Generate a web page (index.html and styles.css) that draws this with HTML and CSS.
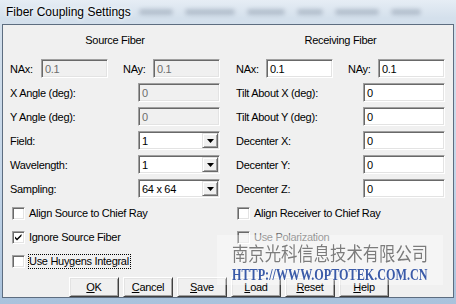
FILE: index.html
```html
<!DOCTYPE html>
<html>
<head>
<meta charset="utf-8">
<link rel="stylesheet" href="styles.css">
</head>
<body>
<div class="titlebar">
  <span class="title">Fiber Coupling Settings</span>
  <div class="smudges">
    <span class="smudge s1"></span><span class="smudge s2"></span><span class="smudge s3"></span><span class="smudge s4"></span><span class="smudge s5"></span><span class="smudge s6"></span>
  </div>
</div>
<div class="window">
  <div class="cols">
    <section class="col">
      <h2 class="head">Source Fiber</h2>
      <div class="rows">
        <div class="row na na-left">
          <span class="lbl">NAx:</span><span class="edit dis">0.1</span><span></span><span class="lbl">NAy:</span><span class="edit dis">0.1</span>
        </div>
        <div class="row"><span class="lbl">X Angle (deg):</span><span class="edit dis field">0</span></div>
        <div class="row"><span class="lbl">Y Angle (deg):</span><span class="edit dis field">0</span></div>
        <div class="row"><span class="lbl">Field:</span><span class="combo field"><span class="ctext">1</span><span class="drop"><svg width="7" height="4" viewBox="0 0 7 4"><polygon points="0,0 7,0 3.5,4" fill="#000"/></svg></span></span></div>
        <div class="row"><span class="lbl">Wavelength:</span><span class="combo field"><span class="ctext">1</span><span class="drop"><svg width="7" height="4" viewBox="0 0 7 4"><polygon points="0,0 7,0 3.5,4" fill="#000"/></svg></span></span></div>
        <div class="row"><span class="lbl">Sampling:</span><span class="combo field"><span class="ctext">64 x 64</span><span class="drop"><svg width="7" height="4" viewBox="0 0 7 4"><polygon points="0,0 7,0 3.5,4" fill="#000"/></svg></span></span></div>
      </div>
      <div class="checks">
        <div class="check"><span class="box"></span><span class="ctl">Align Source to Chief Ray</span></div>
        <div class="check"><span class="box"><svg width="11" height="11" viewBox="0 0 11 11"><path d="M2 4.5 L4 6.5 L8.5 2 L8.5 4 L4 8.5 L2 6.5 Z" fill="#000"/></svg></span><span class="ctl">Ignore Source Fiber</span></div>
        <div class="check"><span class="box"></span><span class="ctl focus">Use Huygens Integral</span></div>
      </div>
    </section>
    <section class="col col-right">
      <h2 class="head">Receiving Fiber</h2>
      <div class="rows">
        <div class="row na na-right">
          <span class="lbl">NAx:</span><span class="edit">0.1</span><span></span><span class="lbl">NAy:</span><span class="edit">0.1</span>
        </div>
        <div class="row"><span class="lbl">Tilt About X (deg):</span><span class="edit field">0</span></div>
        <div class="row"><span class="lbl">Tilt About Y (deg):</span><span class="edit field">0</span></div>
        <div class="row"><span class="lbl">Decenter X:</span><span class="edit field">0</span></div>
        <div class="row"><span class="lbl">Decenter Y:</span><span class="edit field">0</span></div>
        <div class="row"><span class="lbl">Decenter Z:</span><span class="edit field">0</span></div>
      </div>
      <div class="checks">
        <div class="check"><span class="box"></span><span class="ctl">Align Receiver to Chief Ray</span></div>
        <div class="check disabled"><span class="box"></span><span class="ctl">Use Polarization</span></div>
      </div>
    </section>
  </div>
  <div class="buttons">
    <span class="btn"><u>O</u>K</span>
    <span class="btn"><u>C</u>ancel</span>
    <span class="btn"><u>S</u>ave</span>
    <span class="btn"><u>L</u>oad</span>
    <span class="btn"><u>R</u>eset</span>
    <span class="btn"><u>H</u>elp</span>
  </div>
</div>
<div class="watermark">
  <div class="wm-cn">南京光科信息技术有限公司</div>
  <div class="wm-url">HTTP://WWW.OPTOTEK.COM.CN</div>
</div>
</body>
</html>
```
FILE: styles.css
```css
* { box-sizing: border-box; }
html, body { margin: 0; padding: 0; }
body {
  width: 456px;
  height: 304px;
  overflow: hidden;
  position: relative;
  background: linear-gradient(#e6edf5 0px, #d4e0ec 18px, #c3d5e8 60%, #a9c2dc 100%);
  font-family: "Liberation Sans", Arial, sans-serif;
}
.titlebar {
  height: 24px;
  display: flex;
  align-items: center;
  padding-left: 6px;
}
.title {
  font-size: 12px;
  color: #000;
  text-shadow: 0 0 5px #f4f8fc, 0 0 3px #f4f8fc;
  position: relative;
  z-index: 1;
}
.smudges {
  display: flex;
  gap: 12px;
  margin-left: 8px;
  align-items: center;
}
.smudge {
  display: block;
  height: 6px;
  border-radius: 3px;
  background: #4f5f75;
  opacity: 0.28;
  filter: blur(2px);
}
.s1 { width: 34px; }
.s2 { width: 50px; }
.s3 { width: 38px; }
.s4 { width: 26px; }
.s5 { width: 44px; }
.s6 { width: 30px; }

.window {
  margin: 0 2px;
  height: 274px;
  border: 1px solid #5d6d80;
  background: #f0f0f0;
  font-size: 11px;
  letter-spacing: -0.3px;
  color: #000;
}
.cols {
  display: grid;
  grid-template-columns: 210px 209px;
  column-gap: 16px;
  padding: 7px 0 0 7px;
}
.head {
  margin: 0 0 11px;
  font-size: 11px;
  font-weight: normal;
  line-height: 16px;
  text-align: center;
}
.rows {
  display: flex;
  flex-direction: column;
  gap: 5px;
}
.row {
  height: 19px;
  display: flex;
  align-items: center;
}
.row .lbl { flex: 1; }
.na { display: grid; align-items: center; }
.na-left { grid-template-columns: 31px 67px 15px 30px 67px; }
.na-right { grid-template-columns: 30px 67px 15px 30px 67px; }
.edit, .combo {
  height: 19px;
  display: flex;
  align-items: center;
  background: #fff;
  border: 1px solid;
  border-color: #a0a0a0 #fff #fff #a0a0a0;
  box-shadow: inset 1px 1px 0 #696969, inset -1px -1px 0 #e3e3e3;
  padding-left: 3px;
}
.edit.dis { background: #f0f0f0; color: #6d6d6d; }
.field { width: 82px; flex: none; }
.combo { padding: 1px; }
.ctext { flex: 1; padding-left: 2px; }
.drop {
  width: 16px;
  height: 15px;
  display: flex;
  align-items: center;
  justify-content: center;
  background: #f0f0f0;
  border: 1px solid;
  border-color: #e3e3e3 #696969 #696969 #e3e3e3;
  box-shadow: inset 1px 1px 0 #fff, inset -1px -1px 0 #a0a0a0;
}
.drop svg { display: block; margin-top: 1px; }
.checks {
  margin-top: 6px;
  display: flex;
  flex-direction: column;
  gap: 5px;
}
.check {
  height: 19px;
  display: flex;
  align-items: center;
  gap: 3px;
  padding-left: 2px;
}
.col-right .check { padding-left: 1px; }
.box {
  width: 13px;
  height: 13px;
  background: #fff;
  border: 1px solid;
  border-color: #a0a0a0 #fff #fff #a0a0a0;
  box-shadow: inset 1px 1px 0 #696969, inset -1px -1px 0 #e3e3e3;
  display: flex;
  align-items: center;
  justify-content: center;
}
.box svg { display: block; }
.ctl {
  border: 1px solid transparent;
  padding: 0 1px 0 0;
  line-height: 13px;
}
.focus { border: 1px dotted #000; }
.disabled .ctl { color: #6d6d6d; }
.disabled .box { background: #f0f0f0; }
.buttons {
  display: flex;
  gap: 4px;
  margin-top: 6px;
  padding-left: 66px;
}
.btn {
  width: 50px;
  height: 20px;
  display: flex;
  align-items: center;
  justify-content: center;
  background: #f0f0f0;
  border: 1px solid;
  border-color: #fff #404040 #404040 #fff;
  box-shadow: inset 1px 1px 0 #e3e3e3, inset -1px -1px 0 #a0a0a0;
}
.btn u { text-decoration: underline; }
.watermark {
  position: absolute;
  left: 217px;
  top: 235px;
  width: 226px;
  height: 50px;
  background: rgba(255, 255, 255, 0.32);
  padding-left: 15px;
}
.wm-cn {
  font-family: "Noto Sans CJK SC", sans-serif;
  font-size: 19px;
  line-height: 24px;
  color: #7c7c7c;
  white-space: nowrap;
  transform: scaleX(0.86);
  transform-origin: left center;
  text-shadow: 0 0 2px #fff;
  margin-top: 6px;
}
.wm-url {
  font-family: "Liberation Serif", serif;
  font-weight: bold;
  font-size: 16px;
  line-height: 16px;
  color: #3a5aa8;
  white-space: nowrap;
  transform: scaleX(0.76);
  transform-origin: left center;
  text-shadow: 0 0 2px #fff;
  margin-top: 2px;
}
```
